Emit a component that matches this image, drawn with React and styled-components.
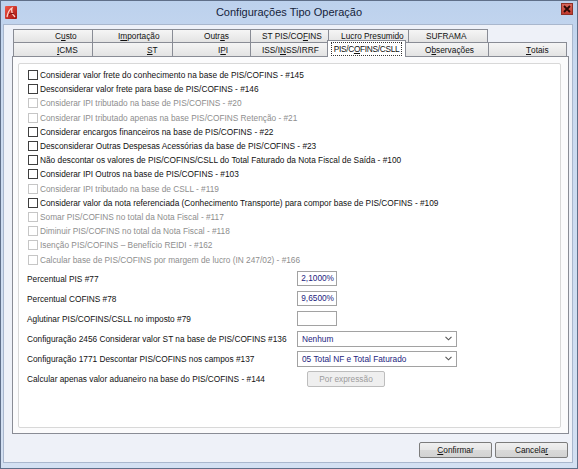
import React from "react";
import styled, { createGlobalStyle } from "styled-components";

const FONT = `"Liberation Sans", Arial, sans-serif`;

const Global = createGlobalStyle`
  html, body { margin: 0; padding: 0; background: #fff; }
  body { width: 578px; height: 469px; overflow: hidden; font-family: ${FONT}; }
  * { box-sizing: border-box; }
`;

const Window = styled.div`
  width: 578px;
  height: 469px;
  border: 1px solid #5f6f89;
  background: linear-gradient(#bcd1ed, #c9d9ef 60px, #d3e0f2);
  display: flex;
  flex-direction: column;
`;

const TitleBar = styled.div`
  height: 23px;
  flex: none;
  display: grid;
  grid-template-columns: 1fr auto 1fr;
  padding: 0 4px;
`;

const TitleIconWrap = styled.div`
  margin-top: 4px;
  width: 12px;
  height: 13px;
`;

const TitleText = styled.div`
  font-family: ${FONT};
  font-size: 11px;
  color: #15233b;
  line-height: 23px;
  white-space: nowrap;
`;

const CloseButton = styled.div`
  justify-self: end;
  margin-top: 2px;
  width: 12px;
  height: 12px;
  background: linear-gradient(#d8675c, #c1392e);
  border: 1px solid #8e3027;
  display: flex;
  align-items: center;
  justify-content: center;
`;

const Client = styled.div`
  flex: 1;
  margin: 0 4px 5px 2px;
  border: 1px solid #a9b7cd;
  background: #eef1f8;
  padding: 4px 3px 0 8px;
  display: flex;
  flex-direction: column;
`;

const TabStrip = styled.div`
  margin-left: 1px;
  display: flex;
  flex-direction: column;
  position: relative;
  z-index: 2;
`;

const TabRow = styled.div`
  display: flex;
  height: ${(p) => p.$h}px;
`;

const Tab = styled.div`
  flex: none;
  width: ${(p) => p.$w}px;
  height: 100%;
  border: 1px solid #898c95;
  border-bottom: none;
  border-right: ${(p) => (p.$last ? "1px solid #898c95" : "none")};
  background: linear-gradient(#f5f5f5, #e3e3e3);
  padding-left: ${(p) => p.$tx - 1}px;
  font-family: ${FONT};
  font-size: 8.3px;
  color: #111;
  white-space: nowrap;
  display: flex;
  align-items: center;
`;

const ActiveTab = styled.div`
  flex: none;
  position: relative;
  z-index: 3;
  width: ${(p) => p.$w + 4}px;
  height: 17px;
  margin: -2px -2px 0 -2px;
  border: 1px solid #898c95;
  border-bottom: none;
  background: #fff;
  font-family: ${FONT};
  font-size: 8.3px;
  letter-spacing: -0.3px;
  color: #111;
  white-space: nowrap;
  display: flex;
  align-items: center;
  justify-content: center;
  padding-bottom: 1px;
`;

const Focus = styled.span`
  outline: 1px dotted #333;
  outline-offset: 1px;
  padding: 0 1px;
`;

const Key = styled.span`
  text-decoration: underline;
  text-underline-offset: 1px;
`;

const Page = styled.div`
  height: 378px;
  border: 1px solid #898c95;
  background: #fbfbfc;
  padding: 6px 7px 5px 5px;
  display: flex;
  position: relative;
  z-index: 1;
`;

const Inner = styled.div`
  flex: 1;
  border: 1px solid #d8d8d8;
  border-radius: 2px;
  background: #fff;
  padding: 4px 8px 0 9px;
  display: flex;
  flex-direction: column;
`;

const CheckList = styled.div`
  display: flex;
  flex-direction: column;
`;

const CheckRow = styled.div`
  height: 14.2px;
  display: flex;
  align-items: center;
  font-family: ${FONT};
  font-size: 8.3px;
  white-space: nowrap;
  color: ${(p) => (p.$disabled ? "#8e8e8e" : "#111")};
`;

const Box = styled.span`
  flex: none;
  width: 10px;
  height: 10px;
  margin-right: 2px;
  background: #fff;
  border: 1px solid ${(p) => (p.$disabled ? "#c6c6c6" : "#3f3f3f")};
`;

const Form = styled.div`
  margin-top: 4px;
  margin-left: -1px;
  display: grid;
  grid-template-columns: 270px 1fr;
  grid-auto-rows: 16px;
  row-gap: 4px;
`;

const FieldLabel = styled.div`
  font-family: ${FONT};
  font-size: 8.3px;
  color: #111;
  white-space: nowrap;
  display: flex;
  align-items: center;
`;

const NumInput = styled.div`
  width: 40px;
  height: 15px;
  border: 1px solid #a2a2a2;
  background: #fff;
  font-family: ${FONT};
  font-size: 8.3px;
  color: #23237e;
  display: flex;
  align-items: center;
  justify-content: flex-end;
  padding-right: 2px;
`;

const Select = styled.div`
  width: 160px;
  height: 16px;
  border: 1px solid #a2a2a2;
  background: #fff;
  font-family: ${FONT};
  font-size: 8.3px;
  color: #23237e;
  display: flex;
  align-items: center;
  justify-content: space-between;
  padding: 0 4px 0 4px;
`;

const DisabledButton = styled.div`
  margin-left: 10px;
  width: 78px;
  height: 16px;
  border: 1px solid #bdbdbd;
  border-radius: 2px;
  background: #efefef;
  font-family: ${FONT};
  font-size: 8.3px;
  color: #9c9c9c;
  display: flex;
  align-items: center;
  justify-content: center;
`;

const ButtonBar = styled.div`
  margin-top: 8px;
  margin-right: 1px;
  display: flex;
  justify-content: flex-end;
  gap: 3px;
`;

const Button = styled.div`
  width: 73px;
  height: 16px;
  border: 1px solid #7c7c7c;
  border-radius: 2px;
  background: linear-gradient(#f0f0f0, #e6e6e6 50%, #d9d9d9 51%, #d2d2d2);
  font-family: ${FONT};
  font-size: 8.3px;
  color: #111;
  display: flex;
  align-items: center;
  justify-content: center;
`;

const AppIcon = () => (
  <svg width="12" height="13" viewBox="0 0 12 13">
    <defs>
      <linearGradient id="ig" x1="0" y1="0" x2="1" y2="1">
        <stop offset="0" stopColor="#f25a4a" />
        <stop offset="1" stopColor="#a3100c" />
      </linearGradient>
    </defs>
    <rect x="0" y="0" width="12" height="13" rx="1" fill="url(#ig)" />
    <path d="M2 11 C3 6 5 3 7 2 C6 5 7 8 10 11" fill="none" stroke="#ffd2c8" strokeWidth="1.3" />
    <path d="M4 9 C6 7 8 7 9 8" fill="none" stroke="#7a0806" strokeWidth="1" />
  </svg>
);

const CloseX = () => (
  <svg width="8" height="8" viewBox="0 0 8 8">
    <path d="M1 1 L7 7 M7 1 L1 7" stroke="#2b0905" strokeWidth="1.8" />
  </svg>
);

const Chevron = () => (
  <svg width="7" height="5" viewBox="0 0 7 5">
    <polyline points="0.5,0.8 3.5,3.8 6.5,0.8" fill="none" stroke="#555" strokeWidth="1.1" />
  </svg>
);

const row1 = [
  { w: 79, tx: 42, label: ["C", "u", "sto"] },
  { w: 80, tx: 26, label: ["I", "m", "portação"] },
  { w: 78, tx: 32, label: ["Outr", "a", "s"] },
  { w: 78, tx: 12, label: ["ST PIS/CO", "F", "INS"] },
  { w: 80, tx: 13, label: ["", "L", "ucro Presumido"] },
  { w: 80, tx: 18, label: ["SUFRAMA", "", ""], last: true },
];

const row2 = [
  { w: 79, tx: 44, label: ["", "I", "CMS"] },
  { w: 80, tx: 55, label: ["", "S", "T"] },
  { w: 78, tx: 46, label: ["I", "P", "I"] },
  { w: 79, tx: 12, label: ["ISS/I", "N", "SS/IRRF"] },
  { w: 75, tx: 13, label: ["PIS/C", "O", "FINS/CSLL"], active: true },
  { w: 84, tx: 21, label: ["O", "b", "servações"] },
  { w: 79, tx: 38, label: ["", "T", "otais"], last: true },
];

const Label = ({ parts }) => (
  <>
    {parts[0]}
    {parts[1] ? <Key>{parts[1]}</Key> : null}
    {parts[2]}
  </>
);

const checks = [
  [false, "Considerar valor frete do conhecimento na base de PIS/COFINS - #145"],
  [false, "Desconsiderar valor frete para base de PIS/COFINS - #146"],
  [true, "Considerar IPI tributado na base de PIS/COFINS - #20"],
  [true, "Considerar IPI tributado apenas na base PIS/COFINS Retenção - #21"],
  [false, "Considerar encargos financeiros na base de PIS/COFINS - #22"],
  [false, "Desconsiderar Outras Despesas Acessórias da base de PIS/COFINS - #23"],
  [false, "Não descontar os valores de PIS/COFINS/CSLL do Total Faturado da Nota Fiscal de Saída - #100"],
  [false, "Considerar IPI Outros na base de PIS/COFINS - #103"],
  [true, "Considerar IPI tributado na base de CSLL - #119"],
  [false, "Considerar valor da nota referenciada (Conhecimento Transporte) para compor base de PIS/COFINS - #109"],
  [true, "Somar PIS/COFINS no total da Nota Fiscal - #117"],
  [true, "Diminuir PIS/COFINS no total da Nota Fiscal - #118"],
  [true, "Isenção PIS/COFINS – Benefício REIDI - #162"],
  [true, "Calcular base de PIS/COFINS por margem de lucro (IN 247/02) - #166"],
];

export default function App() {
  return (
    <>
      <Global />
      <Window>
        <TitleBar>
          <TitleIconWrap>
            <AppIcon />
          </TitleIconWrap>
          <TitleText>Configurações Tipo Operação</TitleText>
          <CloseButton>
            <CloseX />
          </CloseButton>
        </TitleBar>
        <Client>
          <TabStrip>
            <TabRow $h={13}>
              {row1.map((t, i) => (
                <Tab key={i} $w={t.w} $tx={t.tx} $last={t.last}>
                  <Label parts={t.label} />
                </Tab>
              ))}
            </TabRow>
            <TabRow $h={14}>
              {row2.map((t, i) =>
                t.active ? (
                  <ActiveTab key={i} $w={t.w}>
                    <Focus>
                      <Label parts={t.label} />
                    </Focus>
                  </ActiveTab>
                ) : (
                  <Tab key={i} $w={t.w} $tx={t.tx} $last={t.last}>
                    <Label parts={t.label} />
                  </Tab>
                )
              )}
            </TabRow>
          </TabStrip>
          <Page>
            <Inner>
              <CheckList>
                {checks.map(([dis, text], i) => (
                  <CheckRow key={i} $disabled={dis}>
                    <Box $disabled={dis} />
                    {text}
                  </CheckRow>
                ))}
              </CheckList>
              <Form>
                <FieldLabel>Percentual PIS #77</FieldLabel>
                <NumInput>2,1000%</NumInput>
                <FieldLabel>Percentual COFINS #78</FieldLabel>
                <NumInput>9,6500%</NumInput>
                <FieldLabel>Aglutinar PIS/COFINS/CSLL no imposto #79</FieldLabel>
                <NumInput />
                <FieldLabel>Configuração 2456 Considerar valor ST na base de PIS/COFINS #136</FieldLabel>
                <Select>
                  <span>Nenhum</span>
                  <Chevron />
                </Select>
                <FieldLabel>Configuração 1771 Descontar PIS/COFINS nos campos #137</FieldLabel>
                <Select>
                  <span>05 Total NF e Total Faturado</span>
                  <Chevron />
                </Select>
                <FieldLabel>Calcular apenas valor aduaneiro na base do PIS/COFINS - #144</FieldLabel>
                <DisabledButton>Por expressão</DisabledButton>
              </Form>
            </Inner>
          </Page>
          <ButtonBar>
            <Button>
              <Key>C</Key>onfirmar
            </Button>
            <Button>
              Cancela<Key>r</Key>
            </Button>
          </ButtonBar>
        </Client>
      </Window>
    </>
  );
}
